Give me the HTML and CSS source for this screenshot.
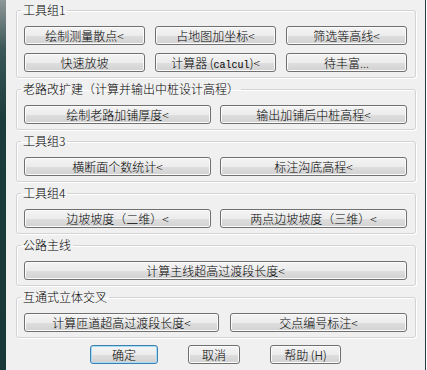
FILE: index.html
```html
<!DOCTYPE html>
<html lang="zh-CN">
<head>
  <meta charset="UTF-8" />
  <title>工具箱</title>
  <link rel="stylesheet" href="styles.css">
</head>
<body>
  <div class="window">
    <div class="strip"></div>
    <div class="dialog">
      <fieldset class="group">
        <legend>工具组1</legend>
        <div class="row cols-3">
          <button>绘制测量散点&lt;</button>
          <button>占地图加坐标&lt;</button>
          <button>筛选等高线&lt;</button>
        </div>
        <div class="row cols-3">
          <button>快速放坡</button>
          <button>计算器 (<span class="mono">calcul</span>)&lt;</button>
          <button>待丰富...</button>
        </div>
      </fieldset>

      <fieldset class="group">
        <legend>老路改扩建（计算并输出中桩设计高程）</legend>
        <div class="row cols-2">
          <button>绘制老路加铺厚度&lt;</button>
          <button>输出加铺后中桩高程&lt;</button>
        </div>
      </fieldset>

      <fieldset class="group">
        <legend>工具组3</legend>
        <div class="row cols-2">
          <button>横断面个数统计&lt;</button>
          <button>标注沟底高程&lt;</button>
        </div>
      </fieldset>

      <fieldset class="group">
        <legend>工具组4</legend>
        <div class="row cols-2">
          <button>边坡坡度（二维）&lt;</button>
          <button>两点边坡坡度（三维）&lt;</button>
        </div>
      </fieldset>

      <fieldset class="group">
        <legend>公路主线</legend>
        <div class="row">
          <button>计算主线超高过渡段长度&lt;</button>
        </div>
      </fieldset>

      <fieldset class="group">
        <legend>互通式立体交叉</legend>
        <div class="row cols-wide">
          <button>计算匝道超高过渡段长度&lt;</button>
          <button>交点编号标注&lt;</button>
        </div>
      </fieldset>

      <div class="actions">
        <button class="default ok">确定</button>
        <button class="cancel">取消</button>
        <button class="help">帮助 (H)</button>
      </div>
    </div>
  </div>
</body>
</html>
```

FILE: styles.css
```css
* { box-sizing: border-box; }
body {
  margin: 0;
  background: #ffffff;
  font-family: "Noto Sans CJK SC", "DejaVu Sans", sans-serif;
  font-size: 12px;
  font-weight: 300;
  color: #000000;
}
.window {
  display: flex;
  width: 427px;
  height: 370px;
}
.strip {
  width: 6px;
  background: linear-gradient(#8e9797 0, #3a5656 50px, #1c3b3b 120px, #183838 100%);
}
.dialog {
  width: 420px;
  background: #f0f0f0;
  border-right: 1px solid #2a3b3b;
  padding: 2px 0 0 10px;
}
.group {
  width: 400px;
  margin: 0 0 3px;
  padding: 8px 8px 5px 7px;
  border: 1px solid #d3d3d3;
  border-radius: 3px;
  box-shadow: 1px 1px 0 #ffffff, inset 1px 1px 0 #ffffff;
}
.group legend {
  margin-left: -3px;
  padding: 0 2px;
  line-height: 16px;
  font-size: 12px;
}
.row {
  display: grid;
  gap: 10px;
}
.row + .row { margin-top: 8px; }
.cols-3 { grid-template-columns: repeat(3, 1fr); }
.cols-2 { grid-template-columns: 1fr 1fr; gap: 9px; }
.cols-wide { grid-template-columns: 195px 1fr; gap: 11px; }
button {
  height: 19px;
  padding: 0;
  font-family: inherit;
  font-size: 12px;
  font-weight: 300;
  line-height: 17px;
  color: #000000;
  border: 1px solid #707070;
  border-radius: 3px;
  background: linear-gradient(#f4f4f4 0%, #ececec 50%, #dedede 51%, #d2d2d2 100%);
  box-shadow: inset 0 0 0 1px #fbfbfb;
  white-space: nowrap;
}
.mono {
  font-family: "Liberation Mono", monospace;
  font-size: 10px;
}
.actions {
  display: flex;
  gap: 30px;
  margin-top: 7px;
  padding-left: 74px;
}
.ok { width: 68px; }
.cancel { width: 52px; }
.help { width: 71px; }
.default {
  border-color: #3c7fb1;
  box-shadow: inset 0 0 0 1px #a6dcf5;
}
```
